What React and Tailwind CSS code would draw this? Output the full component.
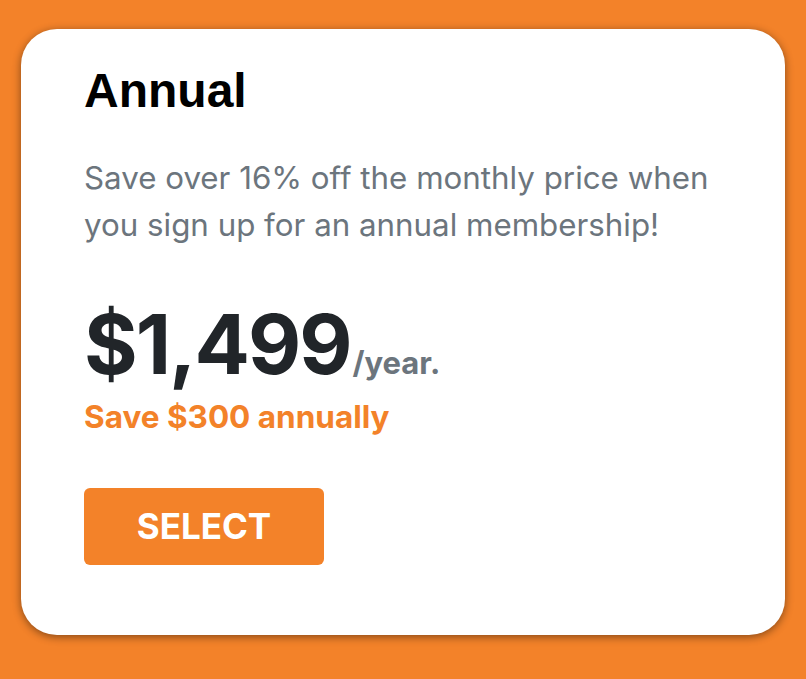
import React from 'react';

const Plan = {
  name: 'Annual',
  blurb: 'Save over 16% off the monthly price when you sign up for an annual membership!',
  price: '$1,499',
  period: '/year.',
  savings: 'Save $300 annually',
};

export default function App() {
  return (
    <div className="min-h-[679px] w-full bg-[#f38229] px-[21px] pt-[29px] pb-[44px]">
      <div className="rounded-[36px] bg-white pl-[63px] pr-[50px] pt-[36px] pb-[70px] shadow-[0_2px_8px_rgba(0,0,0,0.45)]">
        <h2 className="font-['Liberation_Sans',Arial,sans-serif] text-[48px] font-bold leading-[52px] text-black">
          {Plan.name}
        </h2>

        <p className="mt-[38px] font-['Inter',sans-serif] text-[31.3px] leading-[47px] text-[#6c757d]">
          {Plan.blurb}
        </p>

        <div className="mt-[52px] flex items-baseline font-['Inter',sans-serif]">
          <span className="text-[82px] font-bold leading-[88px] tracking-[-2px] text-[#212529]">
            {Plan.price}
          </span>
          <span className="ml-[2px] text-[31px] font-bold text-[#6c757d]">{Plan.period}</span>
        </div>
        <div className="mt-[10px] font-['Inter',sans-serif] text-[31.5px] font-bold leading-[36px] text-[#f38229]">
          {Plan.savings}
        </div>

        <button className="mt-[53px] flex h-[77px] w-[240px] items-center justify-center rounded-[6px] bg-[#f38229] font-['Inter',sans-serif] text-[35px] font-bold text-white">
          SELECT
        </button>
      </div>
    </div>
  );
}
